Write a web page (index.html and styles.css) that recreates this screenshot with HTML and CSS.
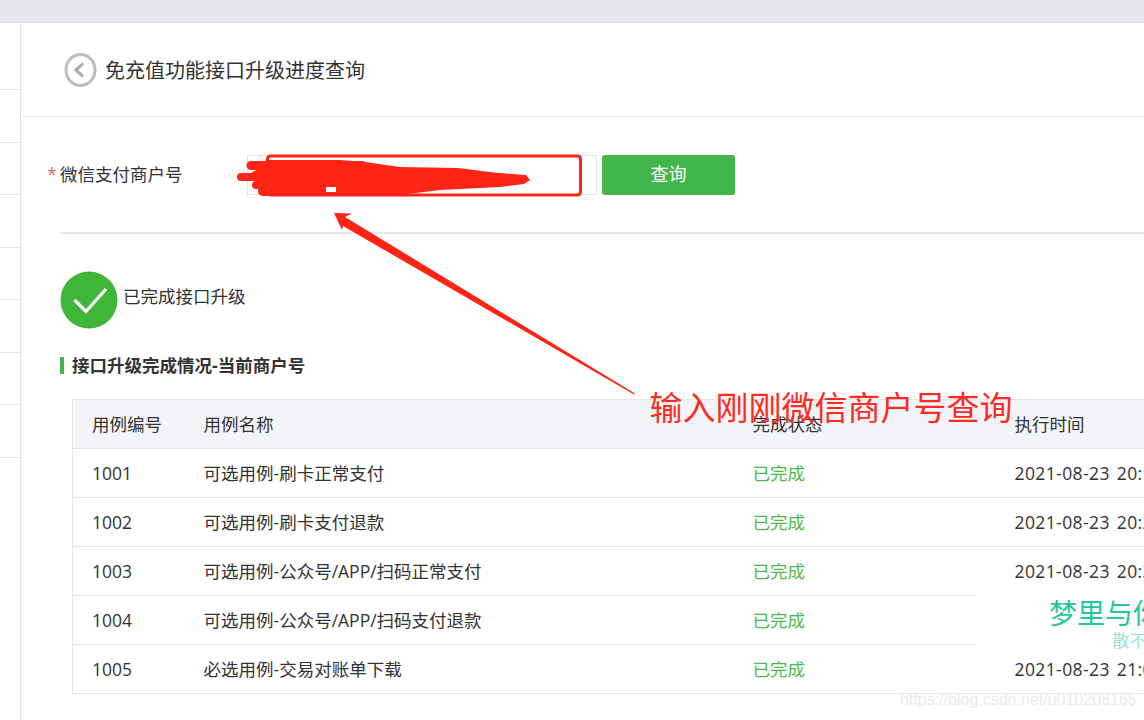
FILE: index.html
```html
<!DOCTYPE html>
<html lang="zh-CN">
<head>
    <meta charset="UTF-8">
    <title>免充值功能接口升级进度查询</title>
    <link rel="stylesheet" href="styles.css">
</head>
<body>
    <div class="topbar"></div>
    <div class="layout">
        <div class="sidebar">
            <div class="side-item first"></div>
            <div class="side-item"></div>
            <div class="side-item"></div>
            <div class="side-item"></div>
            <div class="side-item"></div>
            <div class="side-item"></div>
            <div class="side-item"></div>
            <div class="side-item"></div>
        </div>
        <div class="main">
            <div class="page-head">
                <svg class="back-icon" width="34" height="36" viewBox="0 0 34 36">
                    <ellipse cx="16.5" cy="18" rx="14.5" ry="15.5" fill="none" stroke="#bdbdbd" stroke-width="3"/>
                    <path d="M19 11.5 L12 18 L19 24.5" fill="none" stroke="#a8a8a8" stroke-width="3"/>
                </svg>
                <h1>免充值功能接口升级进度查询</h1>
            </div>
            <div class="content">
                <div class="query-row">
                    <label class="query-label"><span class="required">*</span>微信支付商户号</label>
                    <input class="query-input" type="text">
                    <button class="query-button">查询</button>
                </div>
                <div class="divider"></div>
                <div class="result">
                    <svg class="ok-icon" width="58" height="58" viewBox="0 0 58 58">
                        <circle cx="29" cy="29" r="28.5" fill="#3fb63a"/>
                        <path d="M14.5 29 L26 40.5 L46 18" fill="none" stroke="#fff" stroke-width="3.2"/>
                    </svg>
                    <span>已完成接口升级</span>
                </div>
                <h2 class="section-title">接口升级完成情况-当前商户号</h2>
                <table class="case-table">
                    <colgroup>
                        <col class="col-id">
                        <col class="col-name">
                        <col class="col-state">
                        <col class="col-time">
                    </colgroup>
                    <thead>
                        <tr>
                            <th>用例编号</th>
                            <th>用例名称</th>
                            <th>完成状态</th>
                            <th>执行时间</th>
                        </tr>
                    </thead>
                    <tbody>
                        <tr>
                            <td>1001</td>
                            <td>可选用例-刷卡正常支付</td>
                            <td class="done">已完成</td>
                            <td class="time">2021-08-23 20:15:32</td>
                        </tr>
                        <tr>
                            <td>1002</td>
                            <td>可选用例-刷卡支付退款</td>
                            <td class="done">已完成</td>
                            <td class="time">2021-08-23 20:21:08</td>
                        </tr>
                        <tr>
                            <td>1003</td>
                            <td>可选用例-公众号/APP/扫码正常支付</td>
                            <td class="done">已完成</td>
                            <td class="time">2021-08-23 20:34:47</td>
                        </tr>
                        <tr>
                            <td>1004</td>
                            <td>可选用例-公众号/APP/扫码支付退款</td>
                            <td class="done">已完成</td>
                            <td class="time">2021-08-23 20:42:19</td>
                        </tr>
                        <tr>
                            <td>1005</td>
                            <td>必选用例-交易对账单下载</td>
                            <td class="done">已完成</td>
                            <td class="time">2021-08-23 21:03:51</td>
                        </tr>
                    </tbody>
                </table>
            </div>
        </div>
    </div>

    <!-- hand drawn marks on top of the screenshot -->
    <svg class="marks" width="1144" height="720" viewBox="0 0 1144 720">
        <rect x="267.5" y="156" width="313" height="39" rx="3" fill="none" stroke="#ff2416" stroke-width="3"/>
        <path d="M266 160 L340 160 L365 162 L400 167 L458 168 L498 173 L526 175 L530 180 L524 184 L500 187 L440 190 L400 195 L300 195 L262 196 L258 190 L262 184 L254 180 L252 172 L262 168 Z" fill="#ff2416"/>
        <path d="M251 165.5 L362 165.5" stroke="#ff2416" stroke-width="9" stroke-linecap="round"/>
        <path d="M241 177 L300 177" stroke="#ff2416" stroke-width="8" stroke-linecap="round"/>
        <path d="M256 185 L300 185" stroke="#ff2416" stroke-width="8" stroke-linecap="round"/>
        <path d="M262 191.5 L300 191.5" stroke="#ff2416" stroke-width="8" stroke-linecap="round"/>
        <rect x="326" y="187" width="10" height="5" fill="#fff"/>
        <path d="M334 213 L352 213.5 L345 217 L635 393.5 L634 394.5 L343 226 L342 230 Z" fill="#ff2416"/>
    </svg>
    <div class="note">输入刚刚微信商户号查询</div>
    <div class="stamp">
        <div class="stamp-title">梦里与你</div>
        <div class="stamp-sub">散不了</div>
    </div>
    <div class="source-mark">https://blog.csdn.net/u010208165</div>
</body>
</html>
```
FILE: styles.css
```css
body {
    margin: 0;
    height: 720px;
    overflow: hidden;
    position: relative;
    background-color: #fff;
    color: #333;
    font-family: "Open Sans", "Noto Sans CJK SC", sans-serif;
    font-size: 17.5px;
}

.topbar {
    height: 22px;
    background-color: #e6e7eb;
    border-bottom: 1px solid #dcdde1;
}

.layout {
    display: flex;
    height: 697px;
}

.sidebar {
    width: 20px;
    flex-shrink: 0;
    border-right: 1px solid #e3e4e9;
}

.side-item {
    height: 52.5px;
    box-sizing: border-box;
    border-bottom: 1px solid #e6e7eb;
}

.side-item.first {
    height: 67px;
}

.main {
    flex: 1;
    min-width: 0;
    padding-left: 1px;
}

.page-head {
    display: flex;
    align-items: center;
    height: 94px;
    box-sizing: border-box;
    padding-left: 42px;
    border-bottom: 1px solid #e6e7eb;
}

.back-icon {
    margin-right: 7px;
}

.page-head h1 {
    margin: 0;
    padding-top: 2px;
    font-size: 20px;
    font-weight: 400;
    line-height: 28px;
}

.content {
    padding: 38px 0 0 38px;
}

.query-row {
    display: flex;
    align-items: center;
    height: 40px;
}

.query-label {
    display: block;
    width: 200px;
    margin-left: -13px;
    padding-bottom: 4px;
    white-space: nowrap;
}

.required {
    display: inline-block;
    width: 13px;
    color: #e8665c;
}

.query-input {
    width: 350px;
    height: 40px;
    box-sizing: border-box;
    border: 1px solid #e6e6e6;
    padding: 0;
    background-color: #fff;
}

.query-button {
    width: 133px;
    height: 40px;
    margin-left: 5px;
    padding: 0 0 4px;
    border: none;
    border-radius: 3px;
    background-color: #43b649;
    color: #fff;
    font-family: inherit;
    font-size: 18px;
}

.divider {
    height: 2px;
    margin-top: 37px;
    background-color: #e6e6ea;
}

.result {
    display: flex;
    align-items: center;
    gap: 5px;
    margin-top: 37px;
    height: 58px;
}

.result span {
    padding-bottom: 10px;
}

.section-title {
    margin: 28px 0 0;
    padding-left: 8px;
    border-left: 4px solid #43b649;
    font-size: 17.5px;
    font-weight: 700;
    height: 17px;
    line-height: 17px;
    white-space: nowrap;
}

.case-table {
    width: 1200px;
    margin: 25px 0 0 12px;
    border-collapse: collapse;
    table-layout: fixed;
}

.col-id { width: 112px; }
.col-name { width: 549px; }
.col-state { width: 262px; }

.case-table th,
.case-table td {
    height: 49px;
    box-sizing: border-box;
    padding: 0 0 0 19px;
    border: 1px solid #e4e5ea;
    border-left: none;
    border-right: none;
    font-weight: 400;
    line-height: 20px;
    text-align: left;
    white-space: nowrap;
}

.case-table tr > :first-child {
    border-left: 1px solid #e4e5ea;
}

.case-table th {
    background-color: #f3f4f8;
}

.case-table .done {
    color: #4fb84a;
}

.case-table .time {
    letter-spacing: 0.4px;
    word-spacing: 2px;
}

/* things pasted over the screenshot */
.marks {
    position: absolute;
    left: 0;
    top: 0;
}

.note {
    position: absolute;
    left: 649.5px;
    top: 386px;
    font-size: 33px;
    line-height: 44px;
    color: #ff2a20;
    white-space: nowrap;
}

.stamp {
    position: absolute;
    left: 975px;
    top: 595px;
    width: 169px;
    height: 56px;
    background-color: #fff;
    overflow: hidden;
    white-space: nowrap;
}

.stamp-title {
    margin-left: 74px;
    font-size: 28px;
    line-height: 37px;
    color: #22c997;
}

.stamp-sub {
    margin: -2px 0 0 137px;
    font-size: 17.5px;
    line-height: 20px;
    color: #9ae6cd;
}

.source-mark {
    position: absolute;
    left: 900px;
    top: 690px;
    font-family: "Liberation Sans", sans-serif;
    font-size: 16px;
    line-height: 20px;
    color: #ebebeb;
    white-space: nowrap;
}
```
